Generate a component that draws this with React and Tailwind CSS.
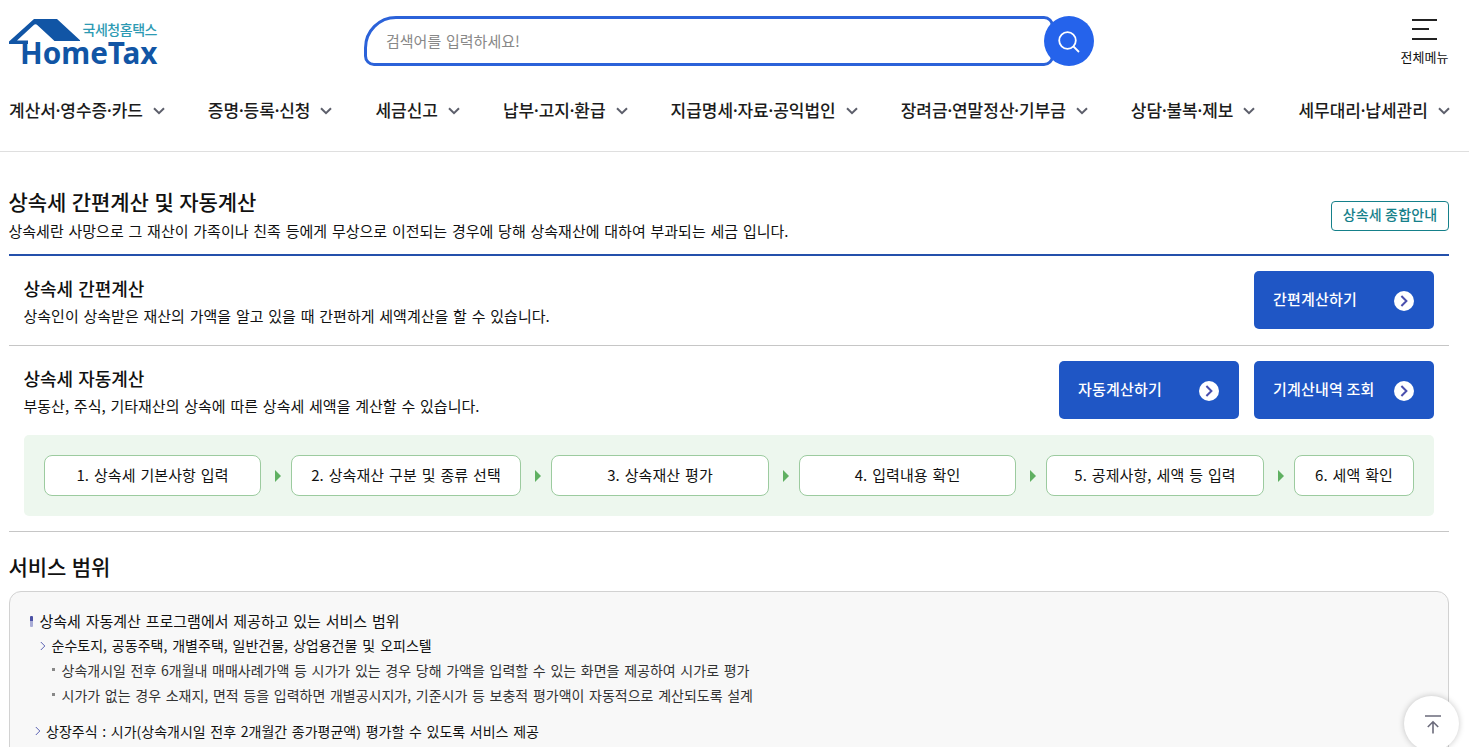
import React from "react";

const NAV = [
  "계산서·영수증·카드",
  "증명·등록·신청",
  "세금신고",
  "납부·고지·환급",
  "지급명세·자료·공익법인",
  "장려금·연말정산·기부금",
  "상담·불복·제보",
  "세무대리·납세관리",
];

const STEPS = [
  { label: "1. 상속세 기본사항 입력", width: "w-[217px]" },
  { label: "2. 상속재산 구분 및 종류 선택", width: "w-[230px]" },
  { label: "3. 상속재산 평가", width: "w-[218px]" },
  { label: "4. 입력내용 확인", width: "w-[217px]" },
  { label: "5. 공제사항, 세액 등 입력", width: "w-[218px]" },
  { label: "6. 세액 확인", width: "w-[120px]" },
];

function Logo() {
  return (
    <svg width="150" height="50" viewBox="0 0 150 50" role="img" aria-label="국세청홈택스 HomeTax" className="overflow-visible">
      <path d="M25 1H48L71 22.2V23H45.5L28.5 7.2Q26.5 5.4 24.5 7.2L8 22.5H19V26H0V23.5Z" fill="#1155a5" />
      <text x="73.5" y="16.5" textLength="75" fontSize="14" fontWeight="500" fill="#2d9ab3" className="font-['Noto_Sans_CJK_KR',sans-serif]">
        국세청홈택스
      </text>
      <text x="11" y="46" textLength="137.5" lengthAdjust="spacingAndGlyphs" fontSize="31" fontWeight="700" fill="#1155a5" className="font-['Noto_Sans',sans-serif]">
        HomeTax
      </text>
    </svg>
  );
}

function Chevron() {
  return (
    <svg width="12" height="8" viewBox="0 0 12 8" fill="none" stroke="#5d5f6b" strokeWidth="2" className="mt-px">
      <path d="M1 1.2L6 6.2L11 1.2" />
    </svg>
  );
}

/* Menu label whose middle dots sit tight between the words. */
function NavLabel({ text }) {
  return (
    <span>
      {text.split("·").map((word, i) => (
        <React.Fragment key={word}>
          {i > 0 && <span className="-mx-[2.7px]">·</span>}
          {word}
        </React.Fragment>
      ))}
    </span>
  );
}

function ActionButton({ children }) {
  return (
    <button className="flex h-[58px] w-[180px] items-center justify-between rounded-[5px] bg-[#1f56c5] pr-5 pl-[19px] text-[15px] font-medium tracking-[0.2px] text-white">
      <span className="-mt-px">{children}</span>
      <svg width="20" height="20" viewBox="0 0 20 20" fill="none" className="mt-[2px]">
        <circle cx="10" cy="10" r="10" fill="#fff" />
        <path d="M7.4 5L12.4 10L7.4 15" stroke="#4a4fae" strokeWidth="2" />
      </svg>
    </button>
  );
}

function SmallArrow() {
  return (
    <svg width="6" height="10" viewBox="0 0 6 10" fill="none" stroke="#5b62b3" className="shrink-0">
      <path d="M0.8 1L4.8 5L0.8 9" />
    </svg>
  );
}

export default function App() {
  return (
    <div className="relative h-[747px] overflow-hidden bg-white font-['Noto_Sans_CJK_KR',sans-serif] text-[#111] [word-spacing:0.09em]">
      <header className="h-[152px] border-b border-[#dfdfdf] pr-5 pl-[9px]">
        <div className="flex h-[82px] items-start justify-between">
          <div className="w-[355px] pt-[18px]">
            <Logo />
          </div>
          <div className="mt-4 flex h-[50px] w-[730px]">
            <div className="flex h-[50px] w-[690px] items-center rounded-tl-[32px] rounded-tr-[10px] rounded-br-[10px] rounded-bl-[10px] border-3 border-[#2b62d9] pl-[19px] text-[15px] text-[#888]">
              검색어를 입력하세요!
            </div>
            <button className="-ml-[10px] flex size-[50px] shrink-0 items-center justify-center rounded-full bg-[#2563eb]">
              <svg width="22" height="22" viewBox="0 0 22 22" fill="none" stroke="#fff" strokeWidth="1.8" className="mt-[2px] -ml-px">
                <circle cx="9.5" cy="9.5" r="8.3" />
                <path d="M15.5 15.5L21 21" />
              </svg>
            </button>
          </div>
          <div className="flex w-[355px] justify-end pt-[19px]">
            <div className="flex w-[49px] flex-col items-center">
              <svg width="25" height="21" viewBox="0 0 25 21" stroke="#222" strokeWidth="2">
                <path d="M0 1H25M0 10H17M0 20H25" />
              </svg>
              <span className="mt-[7px] text-[13px] leading-5 whitespace-nowrap">전체메뉴</span>
            </div>
          </div>
        </div>
        <nav className="-mr-px flex h-14 items-center justify-between">
          {NAV.map((item) => (
            <a key={item} className="flex items-center gap-[10px] text-[17px] font-medium whitespace-nowrap text-[#1c1c1c]">
              <NavLabel text={item} />
              <Chevron />
            </a>
          ))}
        </nav>
      </header>

      <main className="pr-5 pl-[9px]">
        <div className="flex h-[104px] justify-between border-b-2 border-[#2450ab]">
          <div className="-ml-[0.5px] pt-[35px]">
            <h1 className="text-[21px] leading-[28px] font-medium tracking-[-0.1px] [word-spacing:0.05em]">상속세 간편계산 및 자동계산</h1>
            <p className="mt-[5px] text-[15px] leading-[22px]">
              상속세란 사망으로 그 재산이 가족이나 친족 등에게 무상으로 이전되는 경우에 당해 상속재산에 대하여 부과되는 세금 입니다.
            </p>
          </div>
          <button className="mt-[49px] h-[30px] w-[118px] rounded-[4px] border border-[#15808a] pb-[3px] text-[14px] leading-[25px] font-medium tracking-[0.15px] text-[#15808a]">
            상속세 종합안내
          </button>
        </div>

        <section className="flex h-[90px] justify-between border-b border-[#c6c6c6] px-[15px] pt-[15px]">
          <div className="-ml-[0.5px] pt-1">
            <h2 className="text-[18px] leading-[26px] font-medium [word-spacing:0.05em]">상속세 간편계산</h2>
            <p className="mt-1 text-[15px] leading-[22px]">상속인이 상속받은 재산의 가액을 알고 있을 때 간편하게 세액계산을 할 수 있습니다.</p>
          </div>
          <ActionButton>간편계산하기</ActionButton>
        </section>

        <section className="h-[186px] border-b border-[#c6c6c6] px-[15px] pt-[15px]">
          <div className="flex h-[58px] justify-between">
            <div className="-ml-[0.5px] pt-1">
              <h2 className="text-[18px] leading-[26px] font-medium [word-spacing:0.05em]">상속세 자동계산</h2>
              <p className="mt-1 text-[15px] leading-[22px]">부동산, 주식, 기타재산의 상속에 따른 상속세 세액을 계산할 수 있습니다.</p>
            </div>
            <div className="flex gap-[15px]">
              <ActionButton>자동계산하기</ActionButton>
              <ActionButton>기계산내역 조회</ActionButton>
            </div>
          </div>
          <ol className="mt-4 flex h-[81px] items-center rounded-[5px] bg-[#edf7ee] px-5">
            {STEPS.map((step, i) => (
              <React.Fragment key={step.label}>
                {i > 0 && (
                  <li className="flex w-[30px] justify-center pl-[3px]">
                    <svg width="6" height="12" viewBox="0 0 6 12" fill="#5fb061">
                      <path d="M0 0L6 6L0 12Z" />
                    </svg>
                  </li>
                )}
                <li className={`flex h-[41px] items-center justify-center rounded-[8px] border border-[#9ccb9f] bg-white text-[15px] tracking-[0.08px] whitespace-nowrap ${step.width}`}>
                  {step.label}
                </li>
              </React.Fragment>
            ))}
          </ol>
        </section>

        <section className="pt-5">
          <h1 className="-ml-[0.5px] text-[21px] leading-[28px] font-medium tracking-[-0.1px] [word-spacing:0.05em]">서비스 범위</h1>
          <div className="mt-[11px] h-[220px] rounded-[12px] border border-[#d2d2d2] bg-[#f8f8f8] pt-4 pl-5">
            <p className="flex items-center gap-[6.5px] text-[15px] leading-[25px]">
              <span className="mt-[2px] flex h-[11px] w-[3px] flex-col overflow-hidden rounded-[1px]">
                <span className="h-[5px] bg-[#4b51a5]" />
                <span className="h-[6px] bg-[#a9acd6]" />
              </span>
              상속세 자동계산 프로그램에서 제공하고 있는 서비스 범위
            </p>
            <p className="flex items-center gap-[5.5px] pl-[10px] text-[14px] leading-[25px] [word-spacing:0.13em]">
              <SmallArrow />
              순수토지, 공동주택, 개별주택, 일반건물, 상업용건물 및 오피스텔
            </p>
            <ul className="pl-[22px] text-[14px] leading-[25px] text-[#333] [word-spacing:0.11em]">
              <li className="flex items-center gap-[6.5px]">
                <span className="-mt-[3px] size-[3px] bg-[#888]" />
                상속개시일 전후 6개월내 매매사례가액 등 시가가 있는 경우 당해 가액을 입력할 수 있는 화면을 제공하여 시가로 평가
              </li>
              <li className="flex items-center gap-[6.5px]">
                <span className="-mt-[3px] size-[3px] bg-[#888]" />
                시가가 없는 경우 소재지, 면적 등을 입력하면 개별공시지가, 기준시가 등 보충적 평가액이 자동적으로 계산되도록 설계
              </li>
            </ul>
            <p className="mt-[11px] flex items-center gap-[5px] pl-[5px] text-[14px] leading-[25px] [word-spacing:0.11em]">
              <span className="-mt-[2px] flex">
                <SmallArrow />
              </span>
              상장주식 : 시가(상속개시일 전후 2개월간 종가평균액) 평가할 수 있도록 서비스 제공
            </p>
          </div>
        </section>
      </main>

      <button className="absolute top-[696px] left-[1404px] flex size-[55px] items-center justify-center rounded-full bg-white shadow-[0_0_6px_rgba(0,0,0,0.22)]">
        <svg width="16" height="19" viewBox="0 0 16 19" fill="none" stroke="#6b6b7b" strokeWidth="1.6" className="mt-px ml-[2px]">
          <path d="M0 1H16M8 18.5V7M2.8 12L8 6.8L13.2 12" />
        </svg>
      </button>
    </div>
  );
}
